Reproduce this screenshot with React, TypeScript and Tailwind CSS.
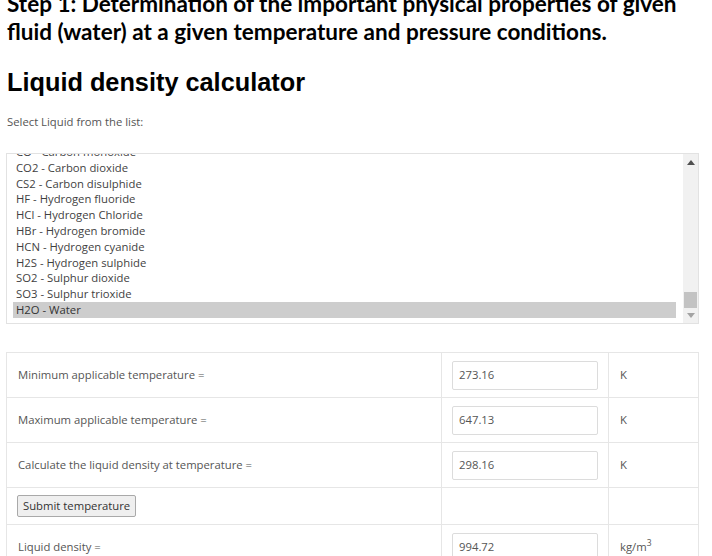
import React from 'react';

const liquids = [
  'CO - Carbon monoxide',
  'CO2 - Carbon dioxide',
  'CS2 - Carbon disulphide',
  'HF - Hydrogen fluoride',
  'HCl - Hydrogen Chloride',
  'HBr - Hydrogen bromide',
  'HCN - Hydrogen cyanide',
  'H2S - Hydrogen sulphide',
  'SO2 - Sulphur dioxide',
  'SO3 - Sulphur trioxide',
  'H2O - Water',
];

function Row({ label, value, unit }: { label: React.ReactNode; value?: string; unit?: React.ReactNode }) {
  return (
    <>
      <div className="h-[45px] border-r border-b border-[#e6e6e6] flex items-center pl-[11px]">{label}</div>
      <div className="h-[45px] border-r border-b border-[#e6e6e6] flex items-center pl-[10px]">
        {value !== undefined && (
          <div className="w-[146px] h-[29px] border border-[#dcdcdc] rounded-[2px] flex items-center pl-[6px] text-[#555]">
            {value}
          </div>
        )}
      </div>
      <div className="h-[45px] border-r border-b border-[#e6e6e6] flex items-center pl-[11px]">{unit}</div>
    </>
  );
}

export default function App() {
  return (
    <div className="w-[712px] h-[556px] overflow-hidden bg-white">
      <div className="pl-[6px] pr-[13px]">
        <h3 className="mt-[-10px] pl-[1px] font-['Lato',sans-serif] font-bold text-[22.5px] leading-[28px] text-black whitespace-nowrap">
          Step 1: Determination of the important physical properties of given
          <br />
          fluid (water) at a given temperature and pressure conditions.
        </h3>
        <h2 className="mt-[23px] pl-[1px] font-['Liberation_Sans',Arial,sans-serif] font-bold text-[25.3px] leading-[26px] text-black">
          Liquid density calculator
        </h2>
        <p className="mt-[19px] pl-[1px] font-['Open_Sans',sans-serif] text-[11.3px] leading-[16px] text-[#555]">
          Select Liquid from the list:
        </p>

        {/* listbox */}
        <div className="mt-[23px] h-[171px] border border-[#e2e2e2] flex font-['Open_Sans',sans-serif] text-[11.3px] text-[#3f3f3f]">
          <div className="flex-1 overflow-hidden pl-[6px] pr-[7px]">
            <div className="mt-[-10px]">
              {liquids.map((l) => (
                <div
                  key={l}
                  className={`h-[15.8px] leading-[15.8px] pl-[3px] whitespace-nowrap ${l === 'H2O - Water' ? 'bg-[#cdcdcd] text-[#333]' : ''}`}
                >
                  {l}
                </div>
              ))}
            </div>
          </div>
          <div className="w-[15px] bg-[#f1f1f1] flex flex-col items-center">
            <div className="h-[17px] flex items-center justify-center">
              <svg width="8" height="5" viewBox="0 0 8 5"><path d="M0 5 L4 0 L8 5 Z" fill="#505050" /></svg>
            </div>
            <div className="flex-1 w-full relative">
              <div className="absolute left-[1px] right-[1px] bottom-[0px] h-[16px] bg-[#c3c3c3]" />
            </div>
            <div className="h-[15px] flex items-center justify-center">
              <svg width="8" height="5" viewBox="0 0 8 5"><path d="M0 0 L8 0 L4 5 Z" fill="#a3a3a3" /></svg>
            </div>
          </div>
        </div>

        {/* table */}
        <div className="mt-[28px] border-l border-t border-[#e6e6e6] grid grid-cols-[435px_167px_90px] font-['Open_Sans',sans-serif] text-[11.3px] text-[#555]">
          <Row label="Minimum applicable temperature =" value="273.16" unit="K" />
          <Row label="Maximum applicable temperature =" value="647.13" unit="K" />
          <Row label="Calculate the liquid density at temperature =" value="298.16" unit="K" />
          <div className="h-[37px] border-r border-b border-[#e6e6e6] flex items-center pl-[10px]">
            <button className="h-[22px] px-[5px] border border-[#a9a9a9] rounded-[2px] bg-[#efefef] text-[11.3px] text-[#333] font-['Open_Sans',sans-serif]">
              Submit temperature
            </button>
          </div>
          <div className="h-[37px] border-r border-b border-[#e6e6e6]" />
          <div className="h-[37px] border-r border-b border-[#e6e6e6]" />
          <Row
            label="Liquid density ="
            value="994.72"
            unit={
              <span>
                kg/m<sup className="text-[8.5px]">3</sup>
              </span>
            }
          />
        </div>
      </div>
    </div>
  );
}
